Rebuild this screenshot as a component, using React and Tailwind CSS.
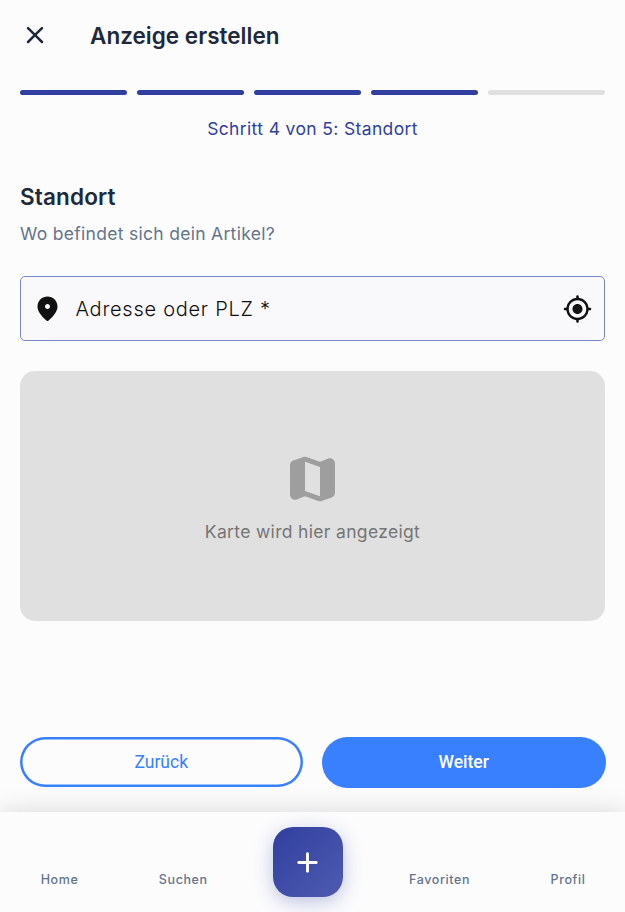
const STEPS = [true, true, true, true, false];

function CloseIcon() {
  return (
    <svg viewBox="0 0 24 24" className="h-[30px] w-[30px]" fill="currentColor">
      <path d="M18.3 5.71a.996.996 0 0 0-1.41 0L12 10.59 7.11 5.7A.996.996 0 1 0 5.7 7.11L10.59 12 5.7 16.89a.996.996 0 1 0 1.41 1.41L12 13.41l4.89 4.89a.996.996 0 1 0 1.41-1.41L13.41 12l4.89-4.89c.38-.38.38-1.02 0-1.4z" />
    </svg>
  );
}

function PinIcon() {
  return (
    <svg viewBox="0.4 0 24 24" className="h-[30px] w-[30px]" fill="currentColor">
      <path d="M12 2c-4.2 0-8 3.22-8 8.2 0 3.18 2.45 6.92 7.34 11.23.38.33.95.33 1.33 0C17.55 17.12 20 13.38 20 10.2 20 5.22 16.2 2 12 2zm0 10c-1.1 0-2-.9-2-2s.9-2 2-2 2 .9 2 2-.9 2-2 2z" />
    </svg>
  );
}

function TargetIcon() {
  return (
    <svg viewBox="-0.4 0 24 24" className="h-[30px] w-[30px]" fill="currentColor">
      <path d="M12 8c-2.21 0-4 1.79-4 4s1.79 4 4 4 4-1.79 4-4-1.79-4-4-4zm8.94 3A8.994 8.994 0 0 0 13 3.06V2c0-.55-.45-1-1-1s-1 .45-1 1v1.06A8.994 8.994 0 0 0 3.06 11H2c-.55 0-1 .45-1 1s.45 1 1 1h1.06A8.994 8.994 0 0 0 11 20.94V22c0 .55.45 1 1 1s1-.45 1-1v-1.06A8.994 8.994 0 0 0 20.94 13H22c.55 0 1-.45 1-1s-.45-1-1-1h-1.06zM12 19c-3.87 0-7-3.13-7-7s3.13-7 7-7 7 3.13 7 7-3.13 7-7 7z" />
    </svg>
  );
}

function MapIcon() {
  return (
    <svg viewBox="0.2 0 24 24" className="h-[60px] w-[60px]" fill="currentColor">
      <path d="M14.65 4.98l-5-1.75c-.42-.15-.88-.15-1.3-.01L4.36 4.56C3.55 4.84 3 5.6 3 6.46v11.85c0 1.41 1.41 2.37 2.72 1.86l2.93-1.14c.22-.09.47-.09.69-.01l5 1.75c.42.15.88.15 1.3.01l3.99-1.34c.81-.27 1.36-1.04 1.36-1.9V5.69c0-1.41-1.41-2.37-2.72-1.86l-2.93 1.14c-.22.08-.46.09-.68.01zM15 18.89l-6-2.11V5.11l6 2.11v11.67z" />
    </svg>
  );
}

function PlusIcon() {
  return (
    <svg viewBox="0 0 24 24" className="h-[35px] w-[35px]" fill="currentColor">
      <path d="M18 13h-5v5c0 .55-.45 1-1 1s-1-.45-1-1v-5H6c-.55 0-1-.45-1-1s.45-1 1-1h5V6c0-.55.45-1 1-1s1 .45 1 1v5h5c.55 0 1 .45 1 1s-.45 1-1 1z" />
    </svg>
  );
}

function NavItem({ label, width }) {
  return (
    <button className={`mt-[59px] h-[18px] shrink-0 text-center text-[12.5px] leading-[18px] font-medium tracking-[0.6px] whitespace-nowrap text-[#64748b] ${width}`}>
      {label}
    </button>
  );
}

export default function App() {
  return (
    <div className="flex h-[912px] w-[625px] flex-col overflow-hidden bg-[#fcfcfd] font-['Inter',sans-serif] text-[#1e293b]">
      <header className="flex h-[70px] shrink-0 items-center px-5">
        <button aria-label="Schließen"><CloseIcon /></button>
        <h1 className="mt-[2px] ml-10 text-[22.5px] leading-[30px] font-semibold tracking-[0.02px] whitespace-nowrap">Anzeige erstellen</h1>
      </header>

      <div className="flex shrink-0 px-5 pt-5">
        {STEPS.map((done, i) => (
          <div key={i} className={i < 4 ? "w-[117px] pr-2.5" : "w-[117px]"}>
            <div className={done ? "h-[5px] rounded-full bg-[#303f9f]" : "h-[5px] rounded-full bg-[#e0e0e0]"} />
          </div>
        ))}
      </div>
      <p className="mt-[21px] h-[25px] shrink-0 text-center text-[17.5px] leading-[25px] font-normal tracking-[0.36px] text-[#303f9f]">
        Schritt 4 von 5: Standort
      </p>

      <main className="flex flex-1 flex-col px-5">
        <h2 className="mt-[41px] h-[30px] text-[22.5px] leading-[30px] font-semibold tracking-[0.15px]">Standort</h2>
        <p className="mt-[9px] h-[25px] text-[17.5px] leading-[25px] font-normal tracking-[0.3px] text-[#64748b]">Wo befindet sich dein Artikel?</p>
        <div className="mt-[30px] flex h-[65px] shrink-0 items-center rounded-[5px] border border-[#7986cb] bg-[#f9f9fc] pr-[12px] pl-[11.5px] text-[#111111]">
          <PinIcon />
          <span className="ml-[13px] flex-1 text-[20px] leading-[30px] font-light tracking-[0.74px]">Adresse oder PLZ *</span>
          <TargetIcon />
        </div>
        <div className="mt-[30px] flex h-[250px] shrink-0 flex-col items-center rounded-[15px] bg-[#e0e0e0] pt-[78px] text-[#9e9e9e]">
          <MapIcon />
          <p className="mt-[10px] text-[17.5px] leading-[25px] font-normal tracking-[0.33px] text-[#757575]">Karte wird hier angezeigt</p>
        </div>
      </main>

      <div className="flex h-[76px] shrink-0 items-start pl-5 font-['Roboto',sans-serif] text-[17.5px]">
        <button className="mt-px h-[50px] w-[282.5px] rounded-full text-[#3880ff] shadow-[inset_0_0_0_2.5px_#3880ff]">Zurück</button>
        <button className="mt-px ml-[19.5px] h-[51px] w-[283.5px] rounded-full bg-[#3880ff] font-medium text-white">Weiter</button>
      </div>

      <nav className="flex h-[100px] shrink-0 items-start bg-[#fcfcfd] shadow-[0_0_25px_rgba(0,0,0,0.15)]">
        <NavItem label="Home" width="w-[119px]" />
        <NavItem label="Suchen" width="w-[128.5px]" />
        <button aria-label="Anzeige erstellen" className="mx-[25px] mt-[15px] flex h-[70px] w-[70px] shrink-0 items-center justify-center rounded-[20px] bg-linear-to-br from-[#303f9f] to-[#4f5bb0] text-white shadow-[0_5px_19px_rgba(48,63,159,0.3)]">
          <PlusIcon />
        </button>
        <NavItem label="Favoriten" width="w-[144px]" />
        <NavItem label="Profil" width="w-[113px]" />
      </nav>
    </div>
  );
}
